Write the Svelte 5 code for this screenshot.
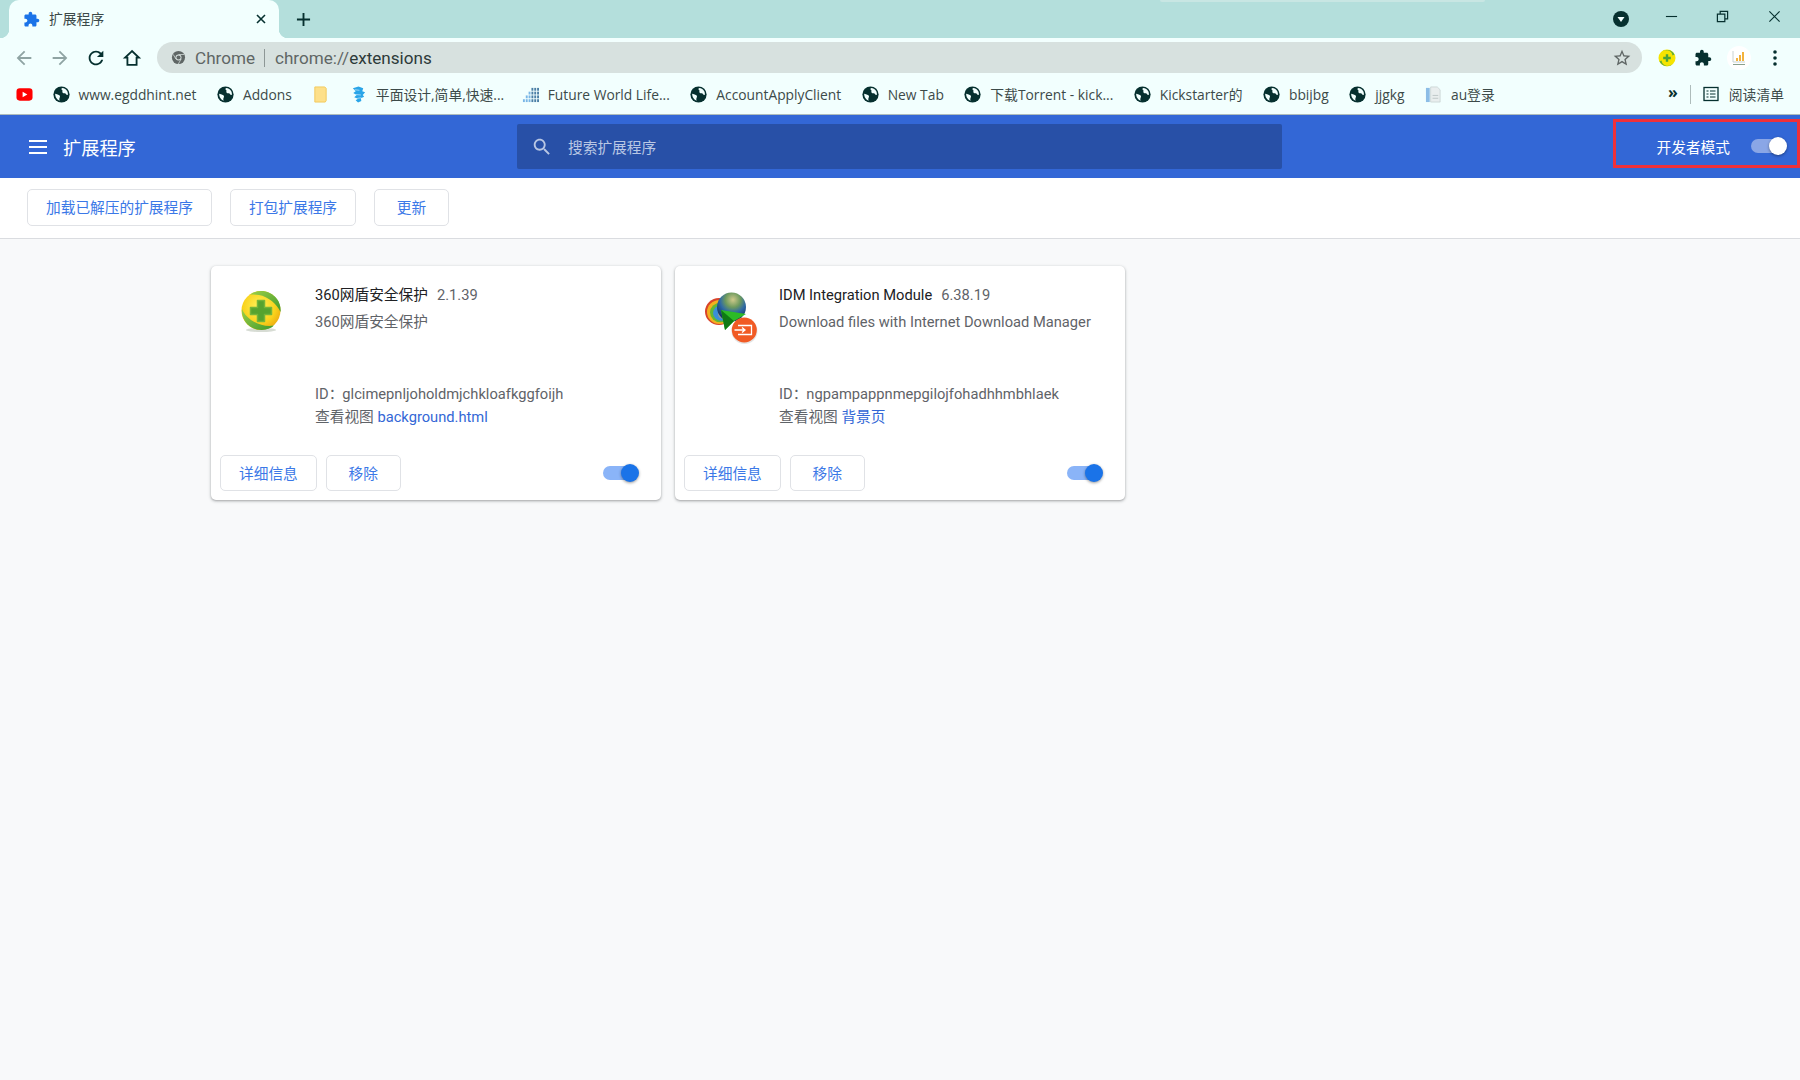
<script>
	const bookmarks = [
		{ icon: 'yt', text: '' },
		{ icon: 'globe', text: 'www.egddhint.net' },
		{ icon: 'globe', text: 'Addons' },
		{ icon: 'folder', text: '' },
		{ icon: 'bird', text: '平面设计,简单,快速...' },
		{ icon: 'grid', text: 'Future World Life...' },
		{ icon: 'globe', text: 'AccountApplyClient' },
		{ icon: 'globe', text: 'New Tab' },
		{ icon: 'globe', text: '下载Torrent - kick...' },
		{ icon: 'globe', text: 'Kickstarter的' },
		{ icon: 'globe', text: 'bbijbg' },
		{ icon: 'globe', text: 'jjgkg' },
		{ icon: 'doc', text: 'au登录' }
	];

	const extensions = [
		{
			name: '360网盾安全保护',
			version: '2.1.39',
			desc: '360网盾安全保护',
			id: 'glcimepnljoholdmjchkloafkggfoijh',
			view: 'background.html',
			icon: '360'
		},
		{
			name: 'IDM Integration Module',
			version: '6.38.19',
			desc: 'Download files with Internet Download Manager',
			id: 'ngpampappnmepgilojfohadhhmbhlaek',
			view: '背景页',
			icon: 'idm'
		}
	];

	const puzzle =
		'M20.5 11H19V7c0-1.1-.9-2-2-2h-4V3.5C13 2.12 11.88 1 10.5 1S8 2.12 8 3.5V5H4c-1.1 0-1.99.9-1.99 2v3.8H3.5c1.49 0 2.7 1.21 2.7 2.7s-1.21 2.7-2.7 2.7H2V20c0 1.1.9 2 2 2h3.8v-1.5c0-1.49 1.21-2.7 2.7-2.7 1.49 0 2.7 1.21 2.7 2.7V22H17c1.1 0 2-.9 2-2v-4h1.5c1.38 0 2.5-1.12 2.5-2.5S21.88 11 20.5 11z';
</script>

{#snippet globe()}
	<svg class="bm-icon" viewBox="0 0 18 18">
		<circle cx="9" cy="9" r="8.6" fill="#06302f" />
		<path d="M9.5 2.2c2.6.1 4.8 1.6 5.9 3.8.4 1.1.5 2.4.2 3.6-.9.1-1.4-.5-1.9-1.2-.5-.8-1.6-.6-2.5-.7-1.2-.2-1.6-1.3-1.2-2.3.2-.7-.3-1-.8-1.3-.4-.6-.2-1.4.3-1.9z" fill="#f2fffe" />
		<path d="M2.3 8.3c1.3.2 2.6.7 3.9 1.3.9.5 1.3 1 1.2 1.9-.1.8-.6 1.2-.7 2-.1.7 0 1.3.4 2-2.8-.8-4.9-3.7-4.8-7.2z" fill="#f2fffe" />
	</svg>
{/snippet}

{#snippet toggle()}
	<span class="toggle"><span class="knob"></span></span>
{/snippet}

<div class="window">
	<div class="tabstrip">
		<div class="tab">
			<svg class="tab-fav" viewBox="0 0 24 24"><path d={puzzle} fill="#1a73e8" /></svg>
			<span class="tab-title">扩展程序</span>
			<svg class="tab-close" viewBox="0 0 12 12"><path d="M2 2l8 8M10 2l-8 8" stroke="#06302f" stroke-width="1.6" /></svg>
		</div>
		<svg class="newtab" viewBox="0 0 16 16"><path d="M8 1v14M1 8h14" stroke="#06302f" stroke-width="2" /></svg>
		<div class="wincontrols">
			<svg class="profile" viewBox="0 0 16 16">
				<circle cx="8" cy="8" r="8" fill="#06302f" />
				<path d="M4.5 6h7L8 11z" fill="#f2fffe" />
			</svg>
			<svg class="winbtn min" viewBox="0 0 14 14"><path d="M1 7h12" stroke="#06302f" stroke-width="1.2" /></svg>
			<svg class="winbtn res" viewBox="0 0 14 14">
				<path d="M1.5 4.5h8v8h-8zM4.5 4.5v-3h8v8h-3" fill="none" stroke="#06302f" stroke-width="1.3" />
			</svg>
			<svg class="winbtn cls" viewBox="0 0 14 14"><path d="M1.5 1.5l11 11M12.5 1.5l-11 11" stroke="#06302f" stroke-width="1.2" /></svg>
		</div>
		<div class="topsliver"></div>
	</div>

	<div class="toolbar">
		<span class="navbtn">
			<svg viewBox="0 0 24 24"><path d="M20 11H7.83l5.59-5.59L12 4l-8 8 8 8 1.41-1.41L7.83 13H20v-2z" fill="#8fa4a3" /></svg>
		</span>
		<span class="navbtn">
			<svg viewBox="0 0 24 24"><path d="M12 4l-1.41 1.41L16.17 11H4v2h12.17l-5.58 5.59L12 20l8-8z" fill="#8fa4a3" /></svg>
		</span>
		<span class="navbtn">
			<svg viewBox="0 0 24 24"><path d="M17.65 6.35C16.2 4.9 14.21 4 12 4c-4.42 0-7.99 3.58-7.99 8s3.57 8 7.99 8c3.73 0 6.84-2.55 7.73-6h-2.08c-.82 2.33-3.04 4-5.65 4-3.31 0-6-2.69-6-6s2.69-6 6-6c1.66 0 3.14.69 4.22 1.78L13 11h7V4l-2.35 2.35z" fill="#06302f" /></svg>
		</span>
		<span class="navbtn">
			<svg viewBox="0 0 24 24"><path d="M12 4.5L4.5 11.5H7V19.5H17V11.5H19.5z" fill="none" stroke="#06302f" stroke-width="2" /></svg>
		</span>
		<div class="omnibox">
			<svg class="chrome-logo" viewBox="0 0 16 16">
				<circle cx="8" cy="8" r="7" fill="#5f6665" />
				<circle cx="8" cy="8" r="3.2" fill="#d7e1df" />
				<circle cx="8" cy="8" r="2.2" fill="#5f6665" />
				<path d="M8 4.8h6M5.2 9.6L2.4 4.7M10.8 9.6L7.8 14.9" stroke="#d7e1df" stroke-width=".8" />
			</svg>
			<span class="scheme">Chrome</span>
			<span class="omni-sep"></span>
			<span class="url"><span class="scheme">chrome://</span>extensions</span>
			<svg class="star" viewBox="0 0 24 24"><path d="M22 9.24l-7.19-.62L12 2 9.19 8.63 2 9.24l5.46 4.73L5.82 21 12 17.27 18.18 21l-1.63-7.03L22 9.24zM12 15.4l-3.76 2.27 1-4.28-3.32-2.88 4.38-.38L12 6.1l1.71 4.04 4.38.38-3.32 2.88 1 4.28L12 15.4z" fill="#5f6665" /></svg>
		</div>
		<span class="tool">
			<svg class="tool-icon" viewBox="0 0 18 18">
				<circle cx="9" cy="9" r="8.5" fill="#f6e400" />
				<path d="M3 3.5A8.5 8.5 0 0 1 16.5 5.5L14.5 6.5A6.5 6.5 0 0 0 3 3.5zM15 14.5A8.5 8.5 0 0 1 1.5 12.5L3.5 11.5A6.5 6.5 0 0 0 15 14.5z" fill="#5dac3b" />
				<path d="M7.8 5.2h2.4v2.6h2.6v2.4h-2.6v2.6H7.8v-2.6H5.2V7.8h2.6z" fill="#4aa33a" />
			</svg>
		</span>
		<span class="tool">
			<svg class="tool-icon" viewBox="0 0 24 24"><path d={puzzle} fill="#06302f" /></svg>
		</span>
		<span class="tool">
			<span class="chart-ring">
				<svg class="tool-icon" viewBox="0 0 18 18">
					<path d="M3 2v11h12" fill="none" stroke="#c9d2d2" stroke-width="1" />
					<path d="M6 12V9h2v3zM9 12V6h2v6zM12 12V3h2v9z" fill="#f3b23c" />
					<path d="M3 15.5h12" stroke="#8aa08e" stroke-width="1" />
				</svg>
			</span>
		</span>
		<span class="tool">
			<svg class="tool-icon" viewBox="0 0 18 18">
				<circle cx="9" cy="3" r="1.8" fill="#06302f" /><circle cx="9" cy="9" r="1.8" fill="#06302f" /><circle cx="9" cy="15" r="1.8" fill="#06302f" />
			</svg>
		</span>
	</div>

	<div class="bookmarks">
		{#each bookmarks as b}
			<div class="bm">
				{#if b.icon === 'globe'}
					{@render globe()}
				{:else if b.icon === 'yt'}
					<svg class="bm-icon" viewBox="0 0 18 18">
						<rect x="0.5" y="2.5" width="17" height="13" rx="3.5" fill="#f00" />
						<path d="M7 6l5 3-5 3z" fill="#fff" />
					</svg>
				{:else if b.icon === 'folder'}
					<svg class="bm-icon" viewBox="0 0 18 18">
						<path d="M3 1h10.5l1.5 1.500V15.500l-1 1.500H3z" fill="#fde08a" stroke="#f2c95a" stroke-width="1" />
					</svg>
				{:else if b.icon === 'bird'}
					<svg class="bm-icon" viewBox="0 0 18 18">
						<path d="M3 2.500L9 .5l5 2-1 3 3 1-2.500 3 1.500 2-3.500 1.500 .5 3L8.500 17.500 6 15l2.500-1.500-4-1.500 2.500-2.500-3.500-2 2.500-2z" fill="#2aa5e8" />
						<path d="M5 4l5 .5M5.500 9l6 .5M8 13l4-.5" stroke="#bfe6fb" stroke-width=".8" />
					</svg>
				{:else if b.icon === 'grid'}
					<svg class="bm-icon" viewBox="0 0 18 18">
						{#each [[10, 2], [13, 2], [16, 2], [7, 6], [10, 6], [13, 6], [16, 6], [4, 10], [7, 10], [10, 10], [13, 10], [16, 10], [1, 14], [4, 14], [7, 14], [10, 14], [13, 14], [16, 14]] as [x, y]}
							<rect {x} {y} width="2" height="3" fill={x < 8 ? '#79b6e6' : '#4b7fa6'} />
						{/each}
					</svg>
				{:else}
					<svg class="bm-icon" viewBox="0 0 18 18">
						<rect x="1" y="2" width="4" height="15" fill="#8cbde6" />
						<path d="M6 1h7l3 3v13H6z" fill="#e9eeee" stroke="#c7d0d0" stroke-width=".8" />
						<path d="M8 10h6M8 13h6" stroke="#bcc6c6" stroke-width="1" />
					</svg>
				{/if}
				{#if b.text}<span>{b.text}</span>{/if}
			</div>
		{/each}
		<div class="bm-end">
			<span class="chev">»</span>
			<span class="bm-sep"></span>
			<svg class="reader" viewBox="0 0 16 16">
				<rect x="1" y="1.5" width="14" height="13" fill="none" stroke="#06302f" stroke-width="1.3" />
				<path d="M3.5 5h2M7 5h5.500M3.500 8h2M7 8h5.500M3.500 11h2M7 11h5.500" stroke="#06302f" stroke-width="1.2" />
			</svg>
			<span class="reader-label">阅读清单</span>
		</div>
	</div>

	<header class="hd">
		<div class="hd-left">
			<svg class="menu" viewBox="0 0 18 14"><path d="M0 1h18M0 7h18M0 13h18" stroke="#fff" stroke-width="2" /></svg>
			<h1>扩展程序</h1>
		</div>
		<div class="search">
			<svg viewBox="0 0 24 24"><path d="M15.5 14h-.79l-.28-.27C15.41 12.59 16 11.11 16 9.5 16 5.91 13.09 3 9.5 3S3 5.91 3 9.5 5.91 16 9.5 16c1.61 0 3.09-.59 4.23-1.57l.27.28v.79l5 4.99L20.49 19l-4.99-5zm-6 0C7.01 14 5 11.99 5 9.5S7.01 5 9.5 5 14 7.01 14 9.5 11.99 14 9.5 14z" fill="#b9c7e4" /></svg>
			<span>搜索扩展程序</span>
		</div>
		<div class="devmode">
			<span>开发者模式</span>
			<span class="toggle light"><span class="knob"></span></span>
		</div>
	</header>

	<div class="actions">
		<button>加载已解压的扩展程序</button>
		<button>打包扩展程序</button>
		<button>更新</button>
	</div>

	<main class="grid">
		{#each extensions as e}
			<article class="card">
				<div class="card-top">
					<div class="card-icon">
						{#if e.icon === '360'}
							<svg viewBox="0 0 60 60">
								<defs>
									<radialGradient id="y360" cx="45%" cy="40%" r="60%">
										<stop offset="0" stop-color="#fff35c" />
										<stop offset="0.7" stop-color="#f9d21c" />
										<stop offset="1" stop-color="#eeb012" />
									</radialGradient>
									<linearGradient id="g360" x1="0" y1="0" x2="1" y2="1">
										<stop offset="0" stop-color="#9ccf48" />
										<stop offset="1" stop-color="#3f9a2c" />
									</linearGradient>
								</defs>
								<ellipse cx="24" cy="45" rx="15" ry="2" fill="#bcc5b8" opacity=".6" />
								<circle cx="24" cy="25.5" r="19.5" fill="url(#y360)" />
								<path d="M13 9.5C21 4 33 5 40 14 43 18 44 23 43.5 27 40 19 31 11.5 22 10 18 9.500 15 9.300 13 9.500z" fill="url(#g360)" />
								<path d="M5 24C4 33 10 42 20 44.5 28 46 34 43.5 37 40.5 29 42 21 39.5 14 35 10 32 6.5 28 5 24z" fill="url(#g360)" />
								<path d="M20.5 15.5H27.5V22.5H34.5V29.5H27.5V36.5H20.5V29.5H13.5V22.5H20.5z" fill="#56a32f" stroke="#74b53a" stroke-width="1.5" stroke-linejoin="round" />
							</svg>
						{:else}
							<svg viewBox="0 0 60 60">
								<defs>
									<radialGradient id="globeidm" cx="55%" cy="25%" r="75%">
										<stop offset="0" stop-color="#cfc98a" />
										<stop offset="0.35" stop-color="#6d9a5e" />
										<stop offset="0.6" stop-color="#2f6aa6" />
										<stop offset="1" stop-color="#0f2a57" />
									</radialGradient>
								</defs>
								<ellipse cx="18" cy="26.5" rx="14" ry="13.5" fill="#d9432a" />
								<ellipse cx="18.5" cy="27" rx="12.5" ry="12" fill="#f2b01f" />
								<ellipse cx="19.5" cy="27.500" rx="10.500" ry="9.800" fill="#62b735" />
								<ellipse cx="20.5" cy="28" rx="8.500" ry="7.800" fill="#3b8fd8" />
								<circle cx="22" cy="29" r="5" fill="#8b9a9a" />
								<circle cx="30.5" cy="22" r="14.5" fill="url(#globeidm)" />
								<path d="M20 25L45 29 33 36 24 45z" fill="#2dbb27" />
								<path d="M20 25L33 36 24 45z" fill="#0f7a14" />
								<circle cx="43.5" cy="46" r="13" fill="#c9c9c9" opacity=".5" />
								<circle cx="43.3" cy="45" r="12.5" fill="#f15a24" />
								<path d="M37 40.5H50.5V49.5H37M33.5 45H44M41 42.5L44 45 41 47.5" fill="none" stroke="#fff" stroke-width="1.3" />
							</svg>
						{/if}
					</div>
					<div class="card-text">
						<div class="name-row">
							<span class="name">{e.name}</span>
							<span class="version">{e.version}</span>
						</div>
						<p class="desc">{e.desc}</p>
						<p class="id">ID：<span>{e.id}</span></p>
						<p class="view">查看视图 <a href="#top">{e.view}</a></p>
					</div>
				</div>
				<footer>
					<button>详细信息</button>
					<button>移除</button>
					{@render toggle()}
				</footer>
			</article>
		{/each}
	</main>
</div>

<style>
	:global(body) {
		margin: 0;
		background: #f8f9fa;
	}
	.window {
		width: 1800px;
		height: 1080px;
		display: flex;
		flex-direction: column;
		overflow: hidden;
		background: #f8f9fa;
		font-family: Roboto, 'Noto Sans CJK SC', sans-serif;
		font-size: 14.7px;
	}
	svg {
		display: block;
		flex: none;
	}
	.tabstrip {
		position: relative;
		flex: none;
		height: 38px;
		background: #b4dfdc;
		display: flex;
		align-items: center;
		padding-left: 9px;
	}
	.topsliver {
		position: absolute;
		left: 1160px;
		top: 0;
		width: 325px;
		height: 2px;
		background: #c8e6e3;
		border-radius: 0 0 6px 6px;
	}
	.tab {
		position: relative;
		width: 270px;
		height: 38px;
		align-self: flex-end;
		box-sizing: border-box;
		padding: 0 12px 0 14px;
		background: #f2fffe;
		border-radius: 10px 10px 0 0;
		display: flex;
		align-items: center;
		font-family: 'Open Sans', 'Noto Sans CJK SC', sans-serif;
		font-size: 13.8px;
		color: #3c4a49;
	}
	.tab::before,
	.tab::after {
		content: '';
		position: absolute;
		bottom: 0;
		width: 9px;
		height: 9px;
	}
	.tab::before {
		left: -9px;
		background: radial-gradient(circle at 0 0, transparent 9px, #f2fffe 9.5px);
	}
	.tab::after {
		right: -9px;
		background: radial-gradient(circle at 100% 0, transparent 9px, #f2fffe 9.5px);
	}
	.tab-fav {
		width: 17px;
		height: 17px;
	}
	.tab-title {
		margin: 0 0 2px 9px;
		flex: 1;
	}
	.tab-close {
		width: 12px;
		height: 12px;
	}
	.newtab {
		width: 15px;
		height: 15px;
		margin-left: 17px;
	}
	.wincontrols {
		margin-left: auto;
		display: flex;
		align-items: center;
		padding-right: 19px;
		height: 38px;
	}
	.profile {
		width: 16px;
		height: 16px;
	}
	.winbtn {
		width: 13px;
		height: 13px;
		margin-bottom: 6px;
	}
	.min {
		margin-left: 36px;
	}
	.res {
		margin-left: 38px;
	}
	.cls {
		margin-left: 39px;
	}

	.toolbar {
		flex: none;
		height: 37px;
		background: #f2fffe;
		display: flex;
		align-items: flex-start;
		padding: 4px 7px 0 6px;
		box-sizing: border-box;
	}
	.navbtn {
		width: 36px;
		height: 31px;
		display: flex;
		align-items: center;
		justify-content: center;
	}
	.navbtn svg {
		width: 22px;
		height: 22px;
	}
	.omnibox {
		flex: 1;
		margin: 0 7px;
		height: 31px;
		border-radius: 16px;
		background: #d7e1df;
		display: flex;
		align-items: center;
		padding: 0 10px 0 14px;
		font-size: 17.1px;
		color: #2d3a39;
	}
	.chrome-logo {
		width: 15px;
		height: 15px;
		margin-right: 9px;
	}
	.scheme {
		color: #5f6665;
	}
	.omni-sep {
		width: 1px;
		height: 18px;
		background: #8d9796;
		margin: 0 10px 0 9px;
	}
	.url {
		flex: 1;
	}
	.star {
		width: 20px;
		height: 20px;
	}
	.tool {
		width: 36px;
		height: 31px;
		display: flex;
		align-items: center;
		justify-content: center;
	}
	.tool-icon {
		width: 18px;
		height: 18px;
	}
	.chart-ring {
		width: 24px;
		height: 24px;
		border-radius: 50%;
		background: #fff;
		display: flex;
		align-items: center;
		justify-content: center;
	}

	.bookmarks {
		flex: none;
		height: 40px;
		box-sizing: border-box;
		background: #f2fffe;
		border-bottom: 1px solid #aebcbb;
		display: flex;
		align-items: center;
		gap: 20.5px;
		padding: 0 0 1px 16px;
		font-family: 'Open Sans', 'Noto Sans CJK SC', sans-serif;
		font-size: 13.8px;
		color: #3c4a49;
	}
	.bm {
		display: flex;
		align-items: center;
		gap: 9px;
		white-space: nowrap;
	}
	.bm:first-child {
		margin-right: -1px;
	}
	.bm:nth-child(5) {
		margin-right: -3px;
	}
	.bm-icon {
		width: 17px;
		height: 17px;
	}
	.bm-end {
		margin-left: auto;
		display: flex;
		align-items: center;
		padding-right: 16px;
	}
	.chev {
		color: #06302f;
		font-size: 16px;
		font-weight: 700;
		margin: -4px 0 0 3px;
	}
	.bm-sep {
		width: 1px;
		height: 19px;
		background: #aebcbb;
		margin: 0 12px;
	}
	.reader {
		width: 16px;
		height: 16px;
		margin-right: 10px;
	}

	.hd {
		flex: none;
		height: 63px;
		background: #3367d6;
		display: grid;
		grid-template-columns: 517px 765px 1fr;
		align-items: center;
		color: #fff;
	}
	.hd-left {
		display: flex;
		align-items: center;
		padding-left: 29px;
	}
	.menu {
		width: 18px;
		height: 14px;
	}
	h1 {
		margin: 0 0 0 16px;
		font-size: 18.2px;
		font-weight: 400;
	}
	.search {
		height: 45px;
		background: #2850a7;
		display: flex;
		align-items: center;
		padding-left: 14px;
		color: #b9c7e4;
		border-radius: 2px;
	}
	.search svg {
		width: 22px;
		height: 22px;
		margin-right: 15px;
	}
	.search span {
		margin-bottom: 1px;
	}
	.devmode {
		justify-self: end;
		width: 187px;
		height: 49px;
		box-sizing: border-box;
		border: 3px solid #f0303a;
		margin-bottom: 6px;
		display: flex;
		align-items: center;
		justify-content: flex-end;
		gap: 21px;
		padding: 5px 12px 0 0;
	}
	.toggle {
		position: relative;
		display: block;
		width: 34px;
		height: 14px;
		border-radius: 7px;
		background: #8ab4f8;
	}
	.toggle.light {
		background: #8aa6e6;
	}
	.knob {
		position: absolute;
		right: -2px;
		top: -2px;
		width: 18px;
		height: 18px;
		border-radius: 50%;
		background: #1a73e8;
		box-shadow: 0 1px 3px rgba(0, 0, 0, 0.4);
	}
	.light .knob {
		background: #fff;
	}

	.actions {
		flex: none;
		height: 61px;
		box-sizing: border-box;
		background: #fff;
		border-bottom: 1px solid #dadce0;
		display: flex;
		align-items: flex-start;
		gap: 18px;
		padding: 11px 0 0 27px;
	}
	button {
		height: 37px;
		min-width: 75px;
		padding: 0 18px 2px;
		box-sizing: border-box;
		background: #fff;
		border: 1.5px solid #e0e2e6;
		border-radius: 5px;
		color: #3b78e7;
		font: inherit;
	}

	.grid {
		display: grid;
		grid-template-columns: repeat(2, 450px);
		gap: 14px;
		padding: 27px 0 0 211px;
	}
	.card {
		height: 234px;
		background: #fff;
		border-radius: 5px;
		box-shadow:
			0 1px 2px rgba(60, 64, 67, 0.3),
			0 1px 3px 1px rgba(60, 64, 67, 0.15);
		display: flex;
		flex-direction: column;
	}
	.card-top {
		display: flex;
		padding-top: 19px;
	}
	.card-icon {
		width: 104px;
		padding-left: 26px;
		box-sizing: border-box;
	}
	.card-icon svg {
		width: 60px;
		height: 60px;
	}
	.card-text p {
		margin: 0;
		line-height: 20px;
		color: #5f6368;
	}
	.name-row {
		line-height: 20px;
		display: flex;
		gap: 9px;
	}
	.name {
		color: #202124;
	}
	.version {
		color: #5f6368;
	}
	.desc {
		margin-top: 7px !important;
	}
	.id {
		margin-top: 52px !important;
	}
	.id span {
		margin-left: -1px;
	}
	.view {
		margin-top: 3px !important;
	}
	.view a {
		color: #3367d6;
		text-decoration: none;
	}
	footer {
		margin-top: auto;
		display: flex;
		align-items: center;
		gap: 9px;
		padding: 0 24px 9px 9px;
	}
	footer button {
		height: 36px;
	}
	footer .toggle {
		margin-left: auto;
	}
</style>
